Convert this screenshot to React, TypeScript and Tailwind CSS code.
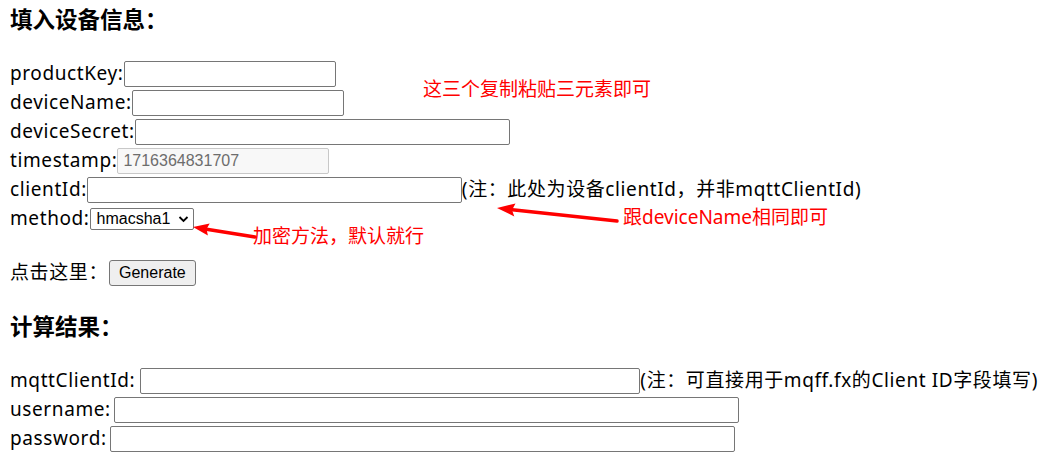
import React from "react";

const font = { fontFamily: '"Noto Sans", "Noto Sans CJK SC", sans-serif' };

function Field({
  label,
  width,
  gap = "",
  disabled,
  value,
  note,
}: {
  label: string;
  width: string;
  gap?: string;
  disabled?: boolean;
  value?: string;
  note?: string;
}) {
  return (
    <div className="flex h-[29px] items-center whitespace-nowrap">
      <span>{label}</span>
      <input
        className={
          (disabled
            ? "border-[#c8c8c8] bg-[#f8f8f8] text-[#6d6d6d] "
            : "border-[#767676] bg-white ") +
          width +
          " " +
          gap +
          " h-[26px] rounded-[2px] border px-[5px] font-['Liberation_Sans'] text-[16px] tracking-normal outline-none"
        }
        disabled={disabled}
        defaultValue={value}
      />
      {note && <span>{note}</span>}
    </div>
  );
}

export default function App() {
  return (
    <div
      className="relative h-[466px] w-[1053px] bg-white text-[19px] tracking-[0.6px] text-black"
      style={font}
    >
      <div className="flex flex-col pl-[10px]">
        <h3 className="mt-[6px] h-[28px] text-[22.5px] font-bold leading-[28px] tracking-normal">填入设备信息：</h3>
        <div className="mt-[25px] flex flex-col">
          <Field label="productKey:" width="w-[212px]" />
          <Field label="deviceName:" width="w-[212px]" />
          <Field label="deviceSecret:" width="w-[375px]" />
          <Field label="timestamp:" width="w-[212px]" disabled value="1716364831707" />
          <Field
            label="clientId:"
            width="w-[375px]"
            note="(注：此处为设备clientId，并非mqttClientId)"
          />
          <div className="flex h-[29px] items-center">
            <span>method:</span>
            <div className="flex h-[22px] w-[104px] items-center justify-between rounded-[2px] border border-[#767676] bg-white pl-[6px] pr-[4px] font-['Liberation_Sans'] text-[16px] tracking-normal">
              <span>hmacsha1</span>
              <svg width="11" height="8" viewBox="0 0 11 8" fill="none">
                <path d="M1.5 2 L5.5 6 L9.5 2" stroke="#000" strokeWidth="1.8" />
              </svg>
            </div>
          </div>
        </div>
        <div className="mt-[25px] flex h-[29px] items-center">
          <span>点击这里：</span>
          <button className="ml-[1px] h-[26px] rounded-[3px] border border-[#767676] bg-[#efefef] px-[9px] font-['Liberation_Sans'] text-[16px] tracking-normal">
            Generate
          </button>
        </div>
        <h3 className="mt-[26px] h-[28px] text-[22.5px] font-bold leading-[28px] tracking-normal">计算结果：</h3>
        <div className="mt-[25px] flex flex-col">
          <Field
            label="mqttClientId:"
            width="w-[500px]"
            gap="ml-[5px]"
            note="(注：可直接用于mqff.fx的Client ID字段填写)"
          />
          <Field label="username:" width="w-[625px]" gap="ml-[3px]" />
          <Field label="password:" width="w-[625px]" gap="ml-[3px]" />
        </div>
      </div>

      {/* hand-drawn red notes */}
      <span className="absolute left-[423px] top-[75px] whitespace-nowrap text-[19px] tracking-normal text-[#ff0000]">
        这三个复制粘贴三元素即可
      </span>
      <span className="absolute left-[623px] top-[203px] whitespace-nowrap text-[19px] tracking-normal text-[#ff0000]">
        跟deviceName相同即可
      </span>
      <span className="absolute left-[253px] top-[222px] whitespace-nowrap text-[19px] tracking-normal text-[#ff0000]">
        加密方法，默认就行
      </span>
      <svg className="pointer-events-none absolute left-0 top-0" width="1053" height="466">
        <line x1="617" y1="221" x2="510" y2="209.5" stroke="#ff0000" strokeWidth="3.5" strokeLinecap="round" />
        <polygon points="497,208 515.5,203.4 512,209.9 514.3,216.4" fill="#ff0000" />
        <line x1="255" y1="237" x2="205" y2="229" stroke="#ff0000" strokeWidth="3.5" strokeLinecap="round" />
        <polygon points="193,227 209.7,223.6 206.5,229 207.9,235.4" fill="#ff0000" />
      </svg>
    </div>
  );
}
